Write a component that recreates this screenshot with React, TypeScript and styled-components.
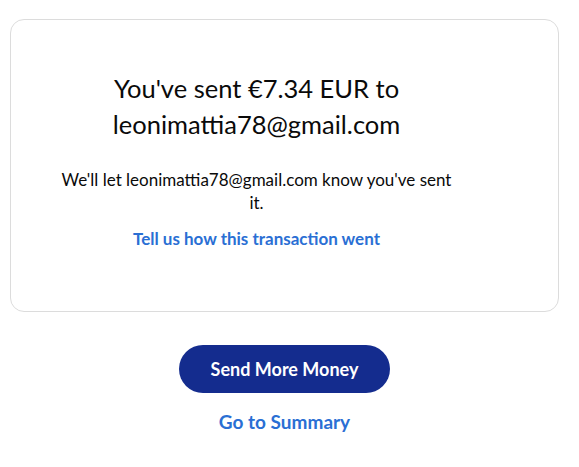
import React from 'react'
import styled, { createGlobalStyle } from 'styled-components'

const GlobalStyle = createGlobalStyle`
    body {
        margin: 0;
        background: #ffffff;
        font-family: Lato, "Noto Sans", sans-serif;
        color: #001435;
    }
`

const Page = styled.div`
    display: flex;
    flex-direction: column;
    align-items: center;
    padding: 19px 20px 0 10px;
`

const Card = styled.section`
    box-sizing: border-box;
    width: 549px;
    border: 1px solid #dcdcdc;
    border-radius: 14px;
    padding: 50px 80px 61px 24px;
    display: flex;
    flex-direction: column;
    align-items: center;
    text-align: center;
`

const Heading = styled.h1`
    margin: 0;
    font-size: 25.5px;
    line-height: 36px;
    font-weight: 400;
    color: #0a0a0a;
    max-width: 340px;
`

const Message = styled.p`
    margin: 26px 0 0;
    font-size: 17px;
    line-height: 23px;
    color: #0a0a0a;
    max-width: 400px;
`

const TextLink = styled.a<{ $top: number; $size?: number }>`
    display: block;
    margin-top: ${(p) => p.$top}px;
    font-size: ${(p) => p.$size ?? 17}px;
    line-height: 23px;
    font-weight: 700;
    color: #2a6fd4;
    text-decoration: none;
    cursor: pointer;
`

const PrimaryButton = styled.button`
    margin-top: 33px;
    width: 211px;
    height: 48px;
    border: none;
    border-radius: 24px;
    background: #142c8e;
    color: #ffffff;
    font-family: inherit;
    font-size: 18px;
    font-weight: 700;
    cursor: pointer;
`

export default function App() {
    return (
        <>
            <GlobalStyle />
            <Page>
                <Card>
                    <Heading>You've sent €7.34 EUR to leonimattia78@gmail.com</Heading>
                    <Message>We'll let leonimattia78@gmail.com know you've sent it.</Message>
                    <TextLink $top={13}>Tell us how this transaction went</TextLink>
                </Card>
                <PrimaryButton>Send More Money</PrimaryButton>
                <TextLink $top={17} $size={19}>Go to Summary</TextLink>
            </Page>
        </>
    )
}
